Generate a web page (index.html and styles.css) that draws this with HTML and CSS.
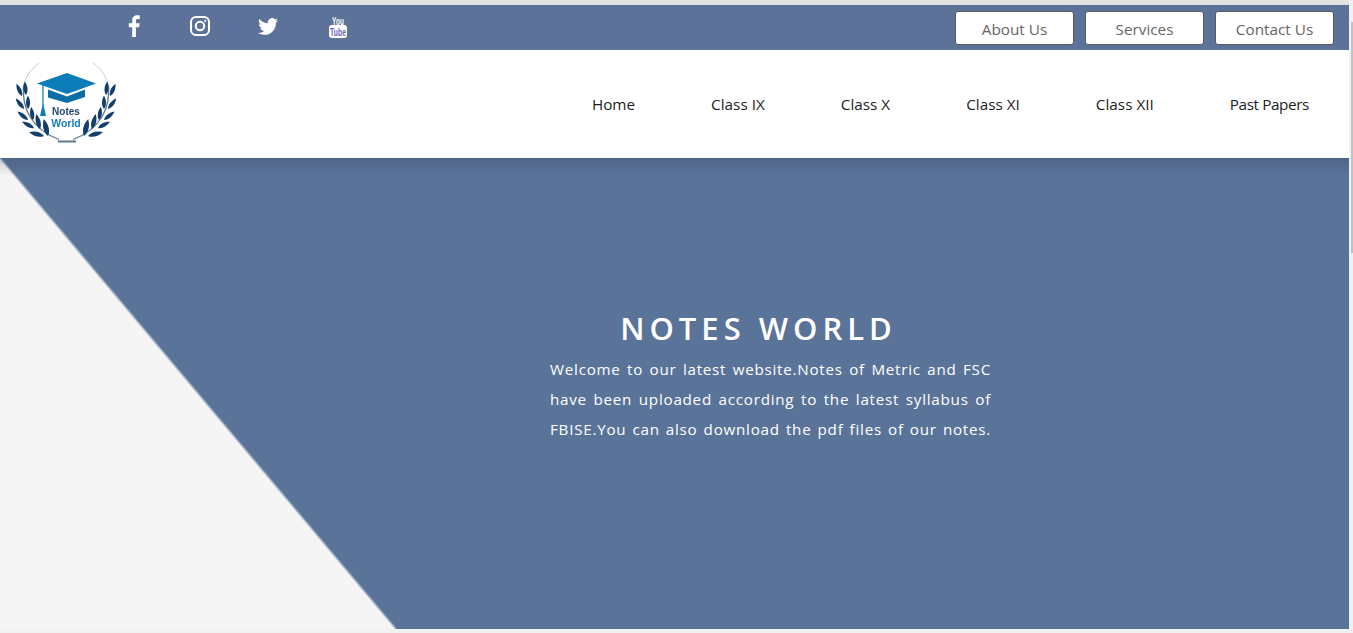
FILE: index.html
```html
<!DOCTYPE html>
<html lang="en">
<head>
<meta charset="utf-8">
<title>Notes World</title>
<link rel="stylesheet" href="styles.css">
</head>
<body>
<div class="page">
  <header class="topbar">
    <div class="social">
      <a class="social-link" href="#" aria-label="Facebook">
        <svg class="icon-fb" viewBox="0 0 12 22"><path d="M7.9 22V12.2h3.2l.6-3.9H7.9V5.9c0-1.1.4-1.9 1.9-1.9h2V.5C11.4.4 10.400 .3 9.200 .3 6.300 .3 4.200 2.100 4.200 5.400v2.900H.8v3.900h3.400V22z" fill="#fff"/></svg>
      </a>
      <a class="social-link" href="#" aria-label="Instagram">
        <svg class="icon-ig" viewBox="0 0 20 20" fill="none" stroke="#fff"><rect x="1" y="1" width="18" height="18" rx="5" stroke-width="2"/><circle cx="10" cy="10" r="4.200" stroke-width="2"/><circle cx="15.200" cy="4.800" r="1.100" fill="#fff" stroke="none"/></svg>
      </a>
      <a class="social-link" href="#" aria-label="Twitter">
        <svg class="icon-tw" viewBox="0 0 24 20"><path d="M24 2.400c-.9.400-1.800.7-2.800.8 1-.6 1.800-1.600 2.200-2.700-1 .6-2 1-3.100 1.200A4.900 4.900 0 0 0 11.900 6.200C7.800 6 4.200 4 1.700.9.400 3.200 1 6.100 3.200 7.500c-.8 0-1.600-.2-2.200-.6 0 2.300 1.600 4.400 3.900 4.900-.7.200-1.500.2-2.200.1.600 2 2.400 3.400 4.600 3.400A9.900 9.900 0 0 1 0 17.800 14 14 0 0 0 7.500 20c9.100 0 14.300-7.700 14-14.600 1-.7 1.800-1.600 2.500-3z" fill="#fff"/></svg>
      </a>
      <a class="social-link" href="#" aria-label="YouTube">
        <svg class="icon-yt" viewBox="0 0 20 24"><text class="yt-you" transform="translate(10 9.500) scale(.62 1)" text-anchor="middle">You</text><rect x="1" y="10" width="18" height="13" rx="3" fill="#fff"/><text class="yt-tube" transform="translate(10 20.800) scale(.6 1)" text-anchor="middle">Tube</text></svg>
      </a>
    </div>
    <div class="top-actions">
      <a class="top-btn" href="#">About Us</a>
      <a class="top-btn" href="#">Services</a>
      <a class="top-btn" href="#">Contact Us</a>
    </div>
  </header>

  <nav class="navbar">
    <svg class="logo" viewBox="0 0 100 82" role="img" aria-label="Notes World logo">
      <defs>
        <path id="leaf" d="M0 0C2.400-3 3-8 0-13.500C-3-8-2.400-3 0 0z"/>
        <g id="wing">
          <path d="M23 0C12 8 8 18 6 28" fill="none" stroke="#c3ccd5" stroke-width="1"/>
          <path d="M8 22C5 44 15 66 43 76.500" fill="none" stroke="#5d7690" stroke-width="1.200"/>
          <g fill="#123f6d">
            <use href="#leaf" transform="translate(6 33) rotate(-24)"/>
            <use href="#leaf" transform="translate(8 46) rotate(-38)"/>
            <use href="#leaf" transform="translate(12 57) rotate(-51)"/>
            <use href="#leaf" transform="translate(18 65) rotate(-63)"/>
            <use href="#leaf" transform="translate(28 73) rotate(-75) scale(1.150)"/>
            <use href="#leaf" transform="translate(10 32) rotate(-5)"/>
            <use href="#leaf" transform="translate(12 46)"/>
            <use href="#leaf" transform="translate(17 57) rotate(-8)"/>
            <use href="#leaf" transform="translate(24 66) rotate(-14) scale(1.150)"/>
            <use href="#leaf" transform="translate(32 73) rotate(-14) scale(1.300)"/>
          </g>
        </g>
      </defs>
      <use href="#wing"/>
      <use href="#wing" transform="matrix(-1 0 0 1 100 0)"/>
      <path d="M42 77.500h18v2H42z" fill="#5d7690"/>
      <path d="M51 10 80 20.500 51 31 21 20.500z" fill="#0b7db8"/>
      <path d="M32 26.500 51 33.500 69 26.500v7.500L51 40 32 34.500z" fill="#0b6ea6"/>
      <path d="M27 21.500v22" stroke="#0b7db8" stroke-width="1.200"/>
      <path d="M27 40l3 13h-6z" fill="#0b7db8"/>
      <text class="logo-notes" x="50" y="51.500" text-anchor="middle">Notes</text>
      <text class="logo-world" x="50" y="64" text-anchor="middle">World</text>
    </svg>
    <ul class="menu">
      <li><a href="#">Home</a></li>
      <li><a href="#">Class IX</a></li>
      <li><a href="#">Class X</a></li>
      <li><a href="#">Class XI</a></li>
      <li><a href="#">Class XII</a></li>
      <li><a class="menu-tight" href="#">Past Papers</a></li>
    </ul>
  </nav>

  <section class="hero">
    <div class="hero-text">
      <h1>NOTES WORLD</h1>
      <p>Welcome to our latest website.Notes of Metric and FSC have been uploaded according to the latest syllabus of FBISE.You can also download the pdf files of our notes.</p>
    </div>
  </section>
</div>
<div class="scrollbar"><div class="scrollbar-thumb"></div></div>
</body>
</html>
```
FILE: styles.css
```css
* { box-sizing: border-box; }
html, body { margin: 0; height: 100%; overflow: hidden; }
body {
  background: #f1f1f1;
  font-family: "Open Sans", "Noto Sans", sans-serif;
}
a { text-decoration: none; }
.page {
  width: 1349px;
  padding-top: 5px;
  background: #e2e2e2;
}
.topbar {
  height: 45px;
  background: #5c7299;
  display: flex;
  justify-content: space-between;
  padding: 6px 15px 0 126px;
}
.social { display: flex; align-items: flex-start; }
.social-link { display: flex; justify-content: center; width: 69px; height: 32px; padding-top: 4px; margin-left: -1px; }
.social-link:first-child { width: 17px; margin-right: 24px; }
.social-link:last-child { margin-left: 1px; }
.icon-fb { width: 12px; height: 22px; }
.icon-ig { width: 20px; height: 20px; margin-top: 1px; }
.icon-tw { width: 20px; height: 17px; margin-top: 3px; }
.icon-yt { width: 20px; height: 24px; }
.yt-you { font: 700 10.500px "Liberation Sans", sans-serif; fill: #fff; }
.yt-tube { font: 700 11.500px "Liberation Sans", sans-serif; fill: #6c62b8; }
.top-actions { display: flex; gap: 11px; }
.top-btn {
  width: 119px;
  height: 34px;
  background: #fff;
  border: 1px solid #595959;
  border-radius: 3px;
  color: #666;
  font-size: 15.300px;
  line-height: 35px;
  text-align: center;
}
.navbar {
  height: 108px;
  background: #fff;
  display: flex;
  align-items: center;
  justify-content: space-between;
  padding: 0 40px 0 16px;
  position: relative;
  z-index: 1;
}
.logo { width: 100px; height: 82px; filter: blur(.3px); }
.logo-notes { font: 700 10px "Liberation Sans", sans-serif; fill: #26496f; }
.logo-world { font: 700 10.500px "Liberation Sans", sans-serif; fill: #1580b8; }
.menu {
  display: flex;
  gap: 76px;
  margin: 0;
  padding: 0;
  list-style: none;
}
.menu a { color: #1c1c1c; font-size: 15.300px; }
.menu .menu-tight { letter-spacing: -.4px; }
.hero {
  height: 471px;
  background-color: #5a7399;
  background-image:
    linear-gradient(to bottom, rgba(40, 55, 80, .22), rgba(40, 55, 80, 0) 18px),
    linear-gradient(to top right, #f5f5f5 calc(50% - 1.500px), #5a7399 calc(50% + 1.500px));
  background-size: 100% 100%, 396px 471px;
  background-repeat: no-repeat;
  padding: 149px 0 0 550px;
}
.hero-text { width: 441px; color: #fff; }
.hero h1 {
  margin: 0 0 5px;
  text-align: center;
  font-size: 31px;
  line-height: 42px;
  font-weight: 600;
  letter-spacing: 5px;
  padding-right: 24px;
}
.hero p {
  margin: 0;
  font-size: 15.200px;
  line-height: 30px;
  letter-spacing: .75px;
  text-align: justify;
  text-align-last: justify;
}
.scrollbar {
  position: absolute;
  top: 5px;
  right: 0;
  width: 4px;
  height: 628px;
  background: #f1f1f1;
}
.scrollbar-thumb {
  margin: 17px 0 0 2px;
  width: 2px;
  height: 231px;
  background: #c1c1c1;
}
```
